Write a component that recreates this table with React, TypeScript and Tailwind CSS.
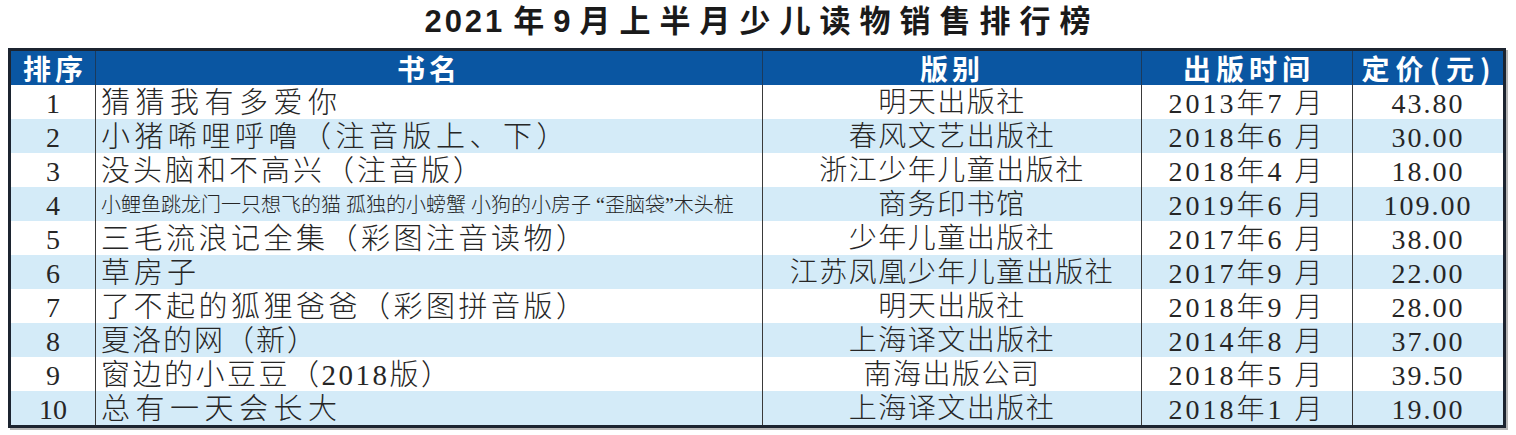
const serif = "font-['Liberation_Serif','Noto_Sans_CJK_SC',serif]";

type Row = {
  rank: string;
  name: string;
  nameClass: string;
  publisher: string;
  date: string;
  price: string;
};

const rows: Row[] = [
  { rank: '1', name: '猜猜我有多爱你', nameClass: 'text-[29px] tracking-[5.5px]', publisher: '明天出版社', date: '2013年7 月', price: '43.80' },
  { rank: '2', name: '小猪唏哩呼噜（注音版上、下）', nameClass: 'text-[29px] tracking-[4.5px]', publisher: '春风文艺出版社', date: '2018年6 月', price: '30.00' },
  { rank: '3', name: '没头脑和不高兴（注音版）', nameClass: 'text-[29px] tracking-[3px]', publisher: '浙江少年儿童出版社', date: '2018年4 月', price: '18.00' },
  { rank: '4', name: '小鲤鱼跳龙门一只想飞的猫 孤独的小螃蟹 小狗的小房子 “歪脑袋”木头桩', nameClass: 'text-[20px] tracking-[0px]', publisher: '商务印书馆', date: '2019年6 月', price: '109.00' },
  { rank: '5', name: '三毛流浪记全集（彩图注音读物）', nameClass: 'text-[29px] tracking-[3.5px]', publisher: '少年儿童出版社', date: '2017年6 月', price: '38.00' },
  { rank: '6', name: '草房子', nameClass: 'text-[29px] tracking-[4px]', publisher: '江苏凤凰少年儿童出版社', date: '2017年9 月', price: '22.00' },
  { rank: '7', name: '了不起的狐狸爸爸（彩图拼音版）', nameClass: 'text-[29px] tracking-[3.5px]', publisher: '明天出版社', date: '2018年9 月', price: '28.00' },
  { rank: '8', name: '夏洛的网（新）', nameClass: 'text-[29px] tracking-[2px]', publisher: '上海译文出版社', date: '2014年8 月', price: '37.00' },
  { rank: '9', name: '窗边的小豆豆（2018版）', nameClass: 'text-[29px] tracking-[2.5px]', publisher: '南海出版公司', date: '2018年5 月', price: '39.50' },
  { rank: '10', name: '总有一天会长大', nameClass: 'text-[29px] tracking-[5.5px]', publisher: '上海译文出版社', date: '2018年1 月', price: '19.00' },
];

const grid = 'grid grid-cols-[84px_667px_379px_211px_151px]';

export default function App() {
  return (
    <div className="w-[1516px] h-[435px] bg-white overflow-hidden">
      {/* Title */}
      <div className="h-[48px] flex items-center justify-center pb-[6px] pl-[8px]">
        <h1 className="text-[31px] font-bold tracking-[9px] text-[#1a1a1a] leading-none font-['Liberation_Sans','Noto_Sans_CJK_SC',sans-serif]">
          <span className="tracking-[3px] mr-[8px]">2021</span>年9月上半月少儿读物销售排行榜
        </h1>
      </div>

      {/* Table */}
      <div className="ml-[8px] w-[1498px] border-[3px] border-[#1c2430] shadow-[2px_2px_0_#b5b5b5]">
        <div className={`${grid} h-[34px] bg-[#0a56a2] text-white font-bold text-[28px] leading-none font-['Noto_Sans_CJK_SC',sans-serif]`}>
          <div className="flex items-center justify-center tracking-[4px] pl-[4px]">排序</div>
          <div className="flex items-center justify-center border-l border-[#1b3a5c] tracking-[4px]">书名</div>
          <div className="flex items-center justify-center border-l border-[#1b3a5c] tracking-[4px]">版别</div>
          <div className="flex items-center justify-center border-l border-[#1b3a5c] tracking-[5px] pl-[4px]">出版时间</div>
          <div className="flex items-center justify-center border-l border-[#1b3a5c] tracking-[6px] pl-[2px]">定价(元)</div>
        </div>

        {rows.map((r, i) => (
          <div
            key={r.rank}
            className={`${grid} h-[34px] text-[#262626] leading-none ${serif} ${i % 2 === 1 ? 'bg-[#d4ebf8]' : 'bg-white'}`}
          >
            <div className="flex items-center justify-center text-[28px] pt-[3px]">{r.rank}</div>
            <div className={`flex items-center pl-[5px] pt-[2px] border-l border-[#3a3a3a] whitespace-nowrap font-light ${r.nameClass}`}>
              {r.name}
            </div>
            <div className="flex items-center justify-center pt-[2px] border-l border-[#3a3a3a] text-[28px] tracking-[1.5px] font-light">
              {r.publisher}
            </div>
            <div className="flex items-center justify-center pt-[3px] border-l border-[#3a3a3a] text-[28px] tracking-[3px] font-light">
              {r.date}
            </div>
            <div className="flex items-center justify-center pt-[3px] border-l border-[#3a3a3a] text-[28px] tracking-[2px]">
              {r.price}
            </div>
          </div>
        ))}
      </div>
    </div>
  );
}
